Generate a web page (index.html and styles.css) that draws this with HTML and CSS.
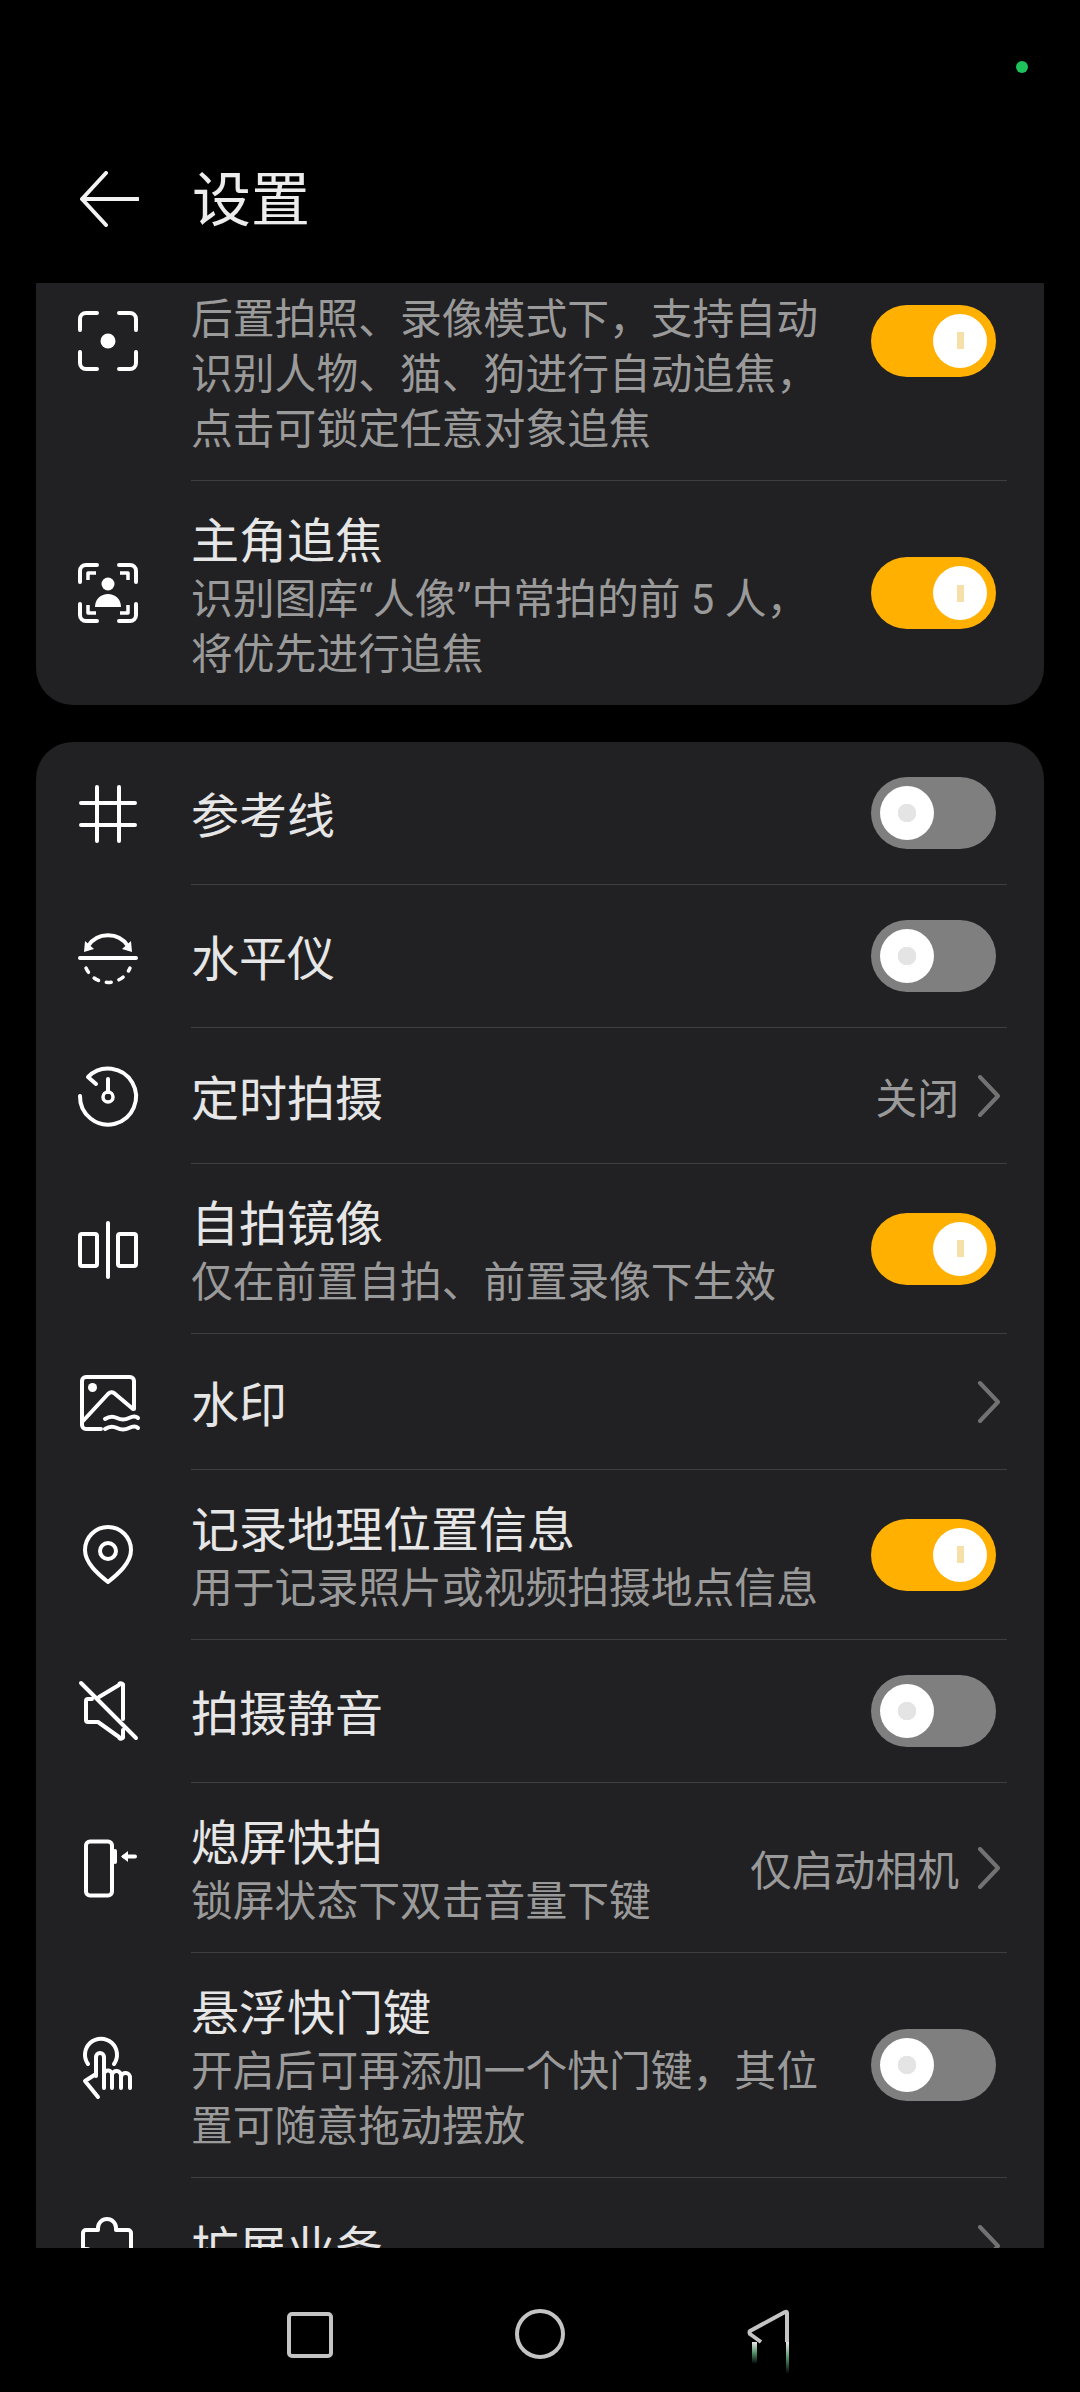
FILE: index.html
```html
<!DOCTYPE html>
<html lang="zh-CN">
<head>
    <meta charset="UTF-8">
    <meta name="viewport" content="width=device-width, initial-scale=1.0">
    <title>设置</title>
    <link rel="stylesheet" href="styles.css">
</head>
<body>
<div class="status"><span class="status-dot"></span></div>

<header class="topbar">
    <svg class="back" viewBox="0 0 60 56"><path d="M27 2 L3 28 L27 54 M3 28 H59"/></svg>
    <h1>设置</h1>
</header>

<main class="scroller">
    <section class="card card-first">
        <div class="row">
            <svg class="icon" viewBox="0 0 60 60">
                <path d="M2 19 V8 a6 6 0 0 1 6-6 H19 M41 2 H52 a6 6 0 0 1 6 6 V19 M2 41 V52 a6 6 0 0 0 6 6 H19 M41 58 H52 a6 6 0 0 0 6-6 V41"/>
                <circle class="fill" cx="30" cy="30" r="7.5"/>
            </svg>
            <div class="row-body">
                <div class="row-text">
                    <div class="title">&nbsp;</div>
                    <div class="sub">后置拍照、录像模式下，支持自动识别人物、猫、狗进行自动追焦，点击可锁定任意对象追焦</div>
                </div>
                <span class="switch on"></span>
            </div>
        </div>
        <div class="row">
            <svg class="icon" viewBox="0 0 60 60">
                <path d="M2 19 V8 a6 6 0 0 1 6-6 H19 M41 2 H52 a6 6 0 0 1 6 6 V19 M2 41 V52 a6 6 0 0 0 6 6 H19 M41 58 H52 a6 6 0 0 0 6-6 V41"/>
                <path class="thin" d="M10 17 V10 H18 M42 10 H50 V17 M10 42 V50 H18 M42 50 H50 V42"/>
                <circle class="fill" cx="30" cy="21" r="6.5"/>
                <path class="fill" d="M17 44 C17 36 23 31 30 31 C37 31 43 36 43 44 Z"/>
            </svg>
            <div class="row-body">
                <div class="row-text">
                    <div class="title">主角追焦</div>
                    <div class="sub">识别图库“人像”中常拍的前 5 人，<br>将优先进行追焦</div>
                </div>
                <span class="switch on"></span>
            </div>
        </div>
    </section>

    <section class="card">
        <div class="row">
            <svg class="icon" viewBox="0 0 60 60"><path d="M19 3 V57 M41 3 V57 M3 19 H57 M3 41 H57"/></svg>
            <div class="row-body">
                <div class="row-text"><div class="title">参考线</div></div>
                <span class="switch"></span>
            </div>
        </div>
        <div class="row">
            <svg class="icon" viewBox="0 0 60 60">
                <path d="M2 31 H58 M10 19 A24 24 0 0 1 50 19"/>
                <path class="fill" d="M6 25 L7 14 L16 22 Z M54 25 L53 14 L44 22 Z"/>
                <path class="dash" d="M8 41 A24 24 0 0 0 52 41"/>
            </svg>
            <div class="row-body">
                <div class="row-text"><div class="title">水平仪</div></div>
                <span class="switch"></span>
            </div>
        </div>
        <div class="row">
            <svg class="icon" viewBox="0 0 60 60">
                <path d="M18 18 L10 11 A28 28 0 1 1 2 30 M30 13 V26"/>
                <circle class="thin" cx="30" cy="31" r="5"/>
            </svg>
            <div class="row-body row-body-short">
                <div class="row-text"><div class="title">定时拍摄</div></div>
                <div class="row-value">
                    <span class="value">关闭</span>
                    <svg class="chevron" viewBox="0 0 24 42"><path d="M3 2 L21 21 L3 40"/></svg>
                </div>
            </div>
        </div>
        <div class="row">
            <svg class="icon" viewBox="0 0 60 60">
                <path d="M30 4 V58"/>
                <rect x="2" y="15" width="17" height="32" rx="2"/>
                <rect x="40" y="15" width="18" height="32" rx="2"/>
            </svg>
            <div class="row-body">
                <div class="row-text">
                    <div class="title">自拍镜像</div>
                    <div class="sub">仅在前置自拍、前置录像下生效</div>
                </div>
                <span class="switch on"></span>
            </div>
        </div>
        <div class="row">
            <svg class="icon" viewBox="0 0 60 60">
                <path d="M23 57 H8 a4 4 0 0 1-4-4 V9 a4 4 0 0 1 4-4 H52 a4 4 0 0 1 4 4 V37 M5 49 L30 22 Q33 19 36 21 L55 37"/>
                <circle class="fill" cx="14.5" cy="15.5" r="4.5"/>
                <path d="M27 47 q6-4 12-1 t 12 0 t 9 0 M27 57 q6-4 12-1 t 12 0 t 9 0"/>
            </svg>
            <div class="row-body row-body-short">
                <div class="row-text"><div class="title">水印</div></div>
                <div class="row-value">
                    <svg class="chevron" viewBox="0 0 24 42"><path d="M3 2 L21 21 L3 40"/></svg>
                </div>
            </div>
        </div>
        <div class="row">
            <svg class="icon" viewBox="0 0 60 60">
                <path d="M30 57 C20 49 7 38 7 25 A23 23 0 0 1 53 25 C53 38 40 49 30 57 Z"/>
                <circle cx="30" cy="26" r="8"/>
            </svg>
            <div class="row-body">
                <div class="row-text">
                    <div class="title">记录地理位置信息</div>
                    <div class="sub">用于记录照片或视频拍摄地点信息</div>
                </div>
                <span class="switch on"></span>
            </div>
        </div>
        <div class="row">
            <svg class="icon" viewBox="0 0 60 60">
                <path d="M14 17 H10 a2 2 0 0 0-2 2 V38 a2 2 0 0 0 2 2 H20 L41 55 a2 2 0 0 0 4-1 V48 M21 15 L41 3 a2 2 0 0 1 4 1 V37 M3 1 L58 56"/>
            </svg>
            <div class="row-body">
                <div class="row-text"><div class="title">拍摄静音</div></div>
                <span class="switch"></span>
            </div>
        </div>
        <div class="row">
            <svg class="icon" viewBox="0 0 60 60">
                <rect x="8" y="3.5" width="26" height="54" rx="4"/>
                <path d="M37 13 V24 M46 18.5 H57"/>
                <path class="fill" d="M43 18.5 L50 13 V24 Z"/>
            </svg>
            <div class="row-body">
                <div class="row-text">
                    <div class="title">熄屏快拍</div>
                    <div class="sub">锁屏状态下双击音量下键</div>
                </div>
                <div class="row-value">
                    <span class="value">仅启动相机</span>
                    <svg class="chevron" viewBox="0 0 24 42"><path d="M3 2 L21 21 L3 40"/></svg>
                </div>
            </div>
        </div>
        <div class="row">
            <svg class="icon" viewBox="0 0 60 60">
                <path d="M10 28 A16 16 0 1 1 36 28 M18 40 V21 a4 4 0 0 1 8 0 V52 M26 38 a4 4 0 0 1 8 1 V52 M34 39 a4.5 4.5 0 0 1 9 1 V52 M43 41 a4.5 4.5 0 0 1 9 1 V52 M18 38 L7 45 L20 61"/>
            </svg>
            <div class="row-body">
                <div class="row-text">
                    <div class="title">悬浮快门键</div>
                    <div class="sub">开启后可再添加一个快门键，其位置可随意拖动摆放</div>
                </div>
                <span class="switch"></span>
            </div>
        </div>
        <div class="row">
            <svg class="icon" viewBox="0 0 60 60">
                <path d="M5 33 V17 a3 3 0 0 1 3-3 H20 V12 a9 9 0 0 1 18 0 V14 H50 a3 3 0 0 1 3 3 V60 M5 60 V49 h3 a8 8 0 0 0 0-16 H5"/>
            </svg>
            <div class="row-body row-body-short">
                <div class="row-text"><div class="title">扩展业务</div></div>
                <div class="row-value">
                    <svg class="chevron" viewBox="0 0 24 42"><path d="M3 2 L21 21 L3 40"/></svg>
                </div>
            </div>
        </div>
    </section>
</main>

<nav class="navbar">
    <svg class="nav-square" viewBox="0 0 46 46"><rect x="2" y="2" width="42" height="42" rx="3"/></svg>
    <svg class="nav-circle" viewBox="0 0 50 50"><circle cx="25" cy="25" r="23"/></svg>
    <svg class="nav-back" viewBox="0 0 44 66">
        <defs>
            <linearGradient id="fade" x1="0" y1="0" x2="0" y2="1">
                <stop offset="0" stop-color="#e8e8e8"/>
                <stop offset=".5" stop-color="#4f8f66"/>
                <stop offset="1" stop-color="#000"/>
            </linearGradient>
        </defs>
        <path d="M14 33 L3 25 Q2 23 3 22 L38 3 Q40 2 40 4 V33"/>
        <rect class="glitch" x="39" y="33" width="3" height="32"/>
        <rect class="glitch" x="5" y="33" width="5" height="22"/>
    </svg>
</nav>
</body>
</html>
```

FILE: styles.css
```css
html, body {
    height: 100%;
    margin: 0;
}

body {
    display: flex;
    flex-direction: column;
    height: 2392px;
    overflow: hidden;
    background-color: #000;
    font-family: Roboto, 'Noto Sans CJK SC', sans-serif;
}

.status {
    display: flex;
    justify-content: flex-end;
    height: 114px;
    padding: 61px 52px 0 0;
    box-sizing: border-box;
}

.status-dot {
    width: 12px;
    height: 12px;
    border-radius: 50%;
    background-color: #1fc15a;
}

.topbar {
    display: flex;
    align-items: center;
    height: 169px;
    padding-left: 79px;
}

.back {
    width: 60px;
    height: 56px;
    fill: none;
    stroke: #f2f2f2;
    stroke-width: 4;
    stroke-linecap: round;
    stroke-linejoin: round;
}

h1 {
    margin: 0 0 6px 53px;
    font-size: 59px;
    font-weight: 400;
    color: #ececec;
}

.scroller {
    flex: 1;
    min-height: 0;
    overflow: hidden;
    padding: 0 36px;
}

.card {
    background-color: #212123;
    border-radius: 37px;
    margin-bottom: 37px;
}

.card-first {
    margin-top: -82px;
}

.row {
    display: flex;
    align-items: center;
    padding: 0 37px 0 42px;
}

.row:last-child .row-body {
    border-bottom: none;
}

.icon {
    flex: none;
    width: 60px;
    height: 60px;
    overflow: visible;
    fill: none;
    stroke: #fff;
    stroke-width: 4;
    stroke-linecap: round;
    stroke-linejoin: round;
}

.icon .fill {
    fill: #fff;
    stroke: none;
}

.icon .thin {
    stroke-width: 3.5;
    stroke-linecap: butt;
}

.icon .dash {
    stroke-width: 3.5;
    stroke-dasharray: 5 8;
    stroke-linecap: round;
}

.row-body {
    flex: 1;
    display: flex;
    align-items: center;
    justify-content: space-between;
    box-sizing: border-box;
    min-height: 143px;
    margin-left: 53px;
    padding: 23px 11px 23px 0;
    border-bottom: 1px solid #3e3e40;
}

.row-body-short {
    min-height: 136px;
}

.row-text {
    padding-top: 8px;
}

.title {
    font-size: 48px;
    line-height: 60px;
    color: #e6e6e6;
}

.sub {
    max-width: 635px;
    font-size: 41.8px;
    line-height: 55px;
    color: #9a9a9a;
}

.row-value {
    display: flex;
    align-items: center;
    gap: 18px;
    margin-right: -5px;
}

.value {
    font-size: 41.8px;
    color: #9a9a9a;
}

.chevron {
    width: 24px;
    height: 42px;
    fill: none;
    stroke: #727272;
    stroke-width: 4;
    stroke-linecap: round;
    stroke-linejoin: round;
}

.switch {
    flex: none;
    display: flex;
    align-items: center;
    box-sizing: border-box;
    width: 125px;
    height: 72px;
    padding: 0 9px;
    border-radius: 36px;
    background-color: #7f7f7f;
}

.switch::before {
    content: "";
    width: 54px;
    height: 54px;
    border-radius: 50%;
    background: radial-gradient(circle, #e4e4e4 9px, #fff 9.5px);
}

.switch.on {
    justify-content: flex-end;
    background-color: #ffb000;
}

.switch.on::before {
    background: linear-gradient(#f7e0a8, #f7e0a8) center / 7px 17px no-repeat, #fff;
}

.navbar {
    flex: none;
    display: flex;
    justify-content: center;
    align-items: flex-start;
    gap: 182px;
    height: 144px;
    padding: 61px 3px 0 0;
    box-sizing: border-box;
}

.navbar svg {
    fill: none;
    stroke: #c4c4c4;
    stroke-width: 4;
    stroke-linejoin: round;
}

.nav-square {
    width: 46px;
    height: 46px;
    margin-top: 3px;
}

.nav-circle {
    width: 50px;
    height: 50px;
}

.nav-back {
    width: 44px;
    height: 66px;
}

.navbar .glitch {
    fill: url(#fade);
    stroke: none;
}
```
